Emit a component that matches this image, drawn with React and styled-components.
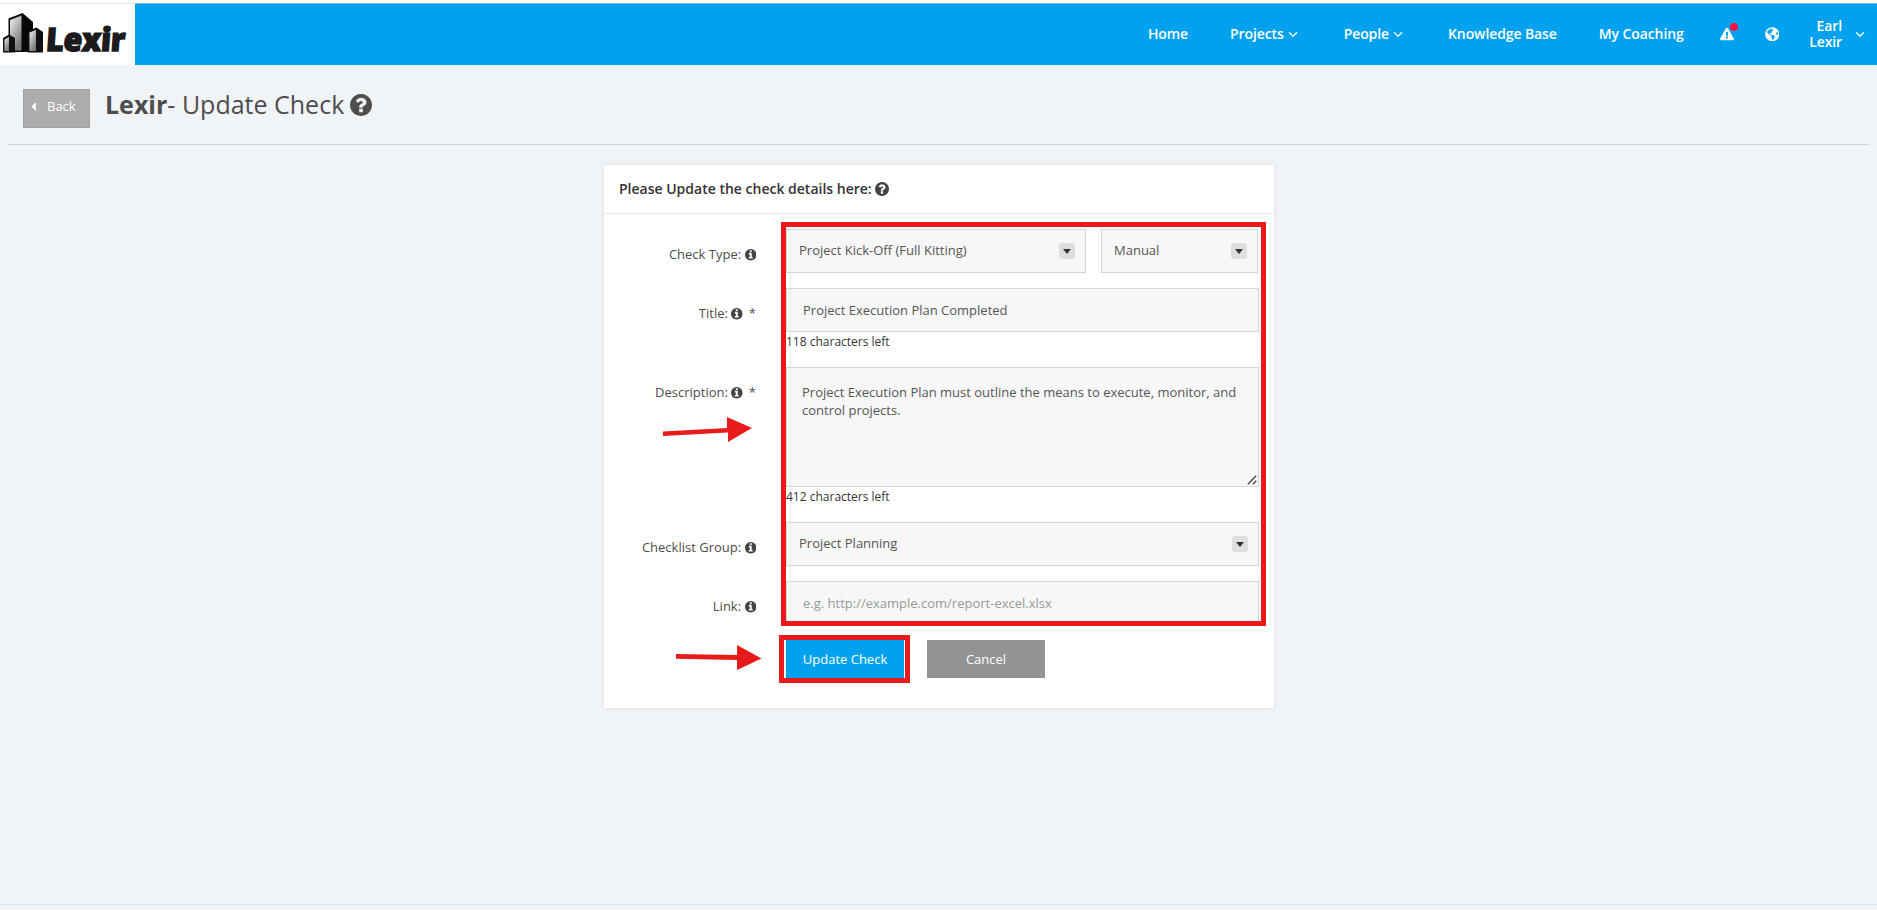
import React from "react";
import styled, { createGlobalStyle, css } from "styled-components";
import {
  FaExclamationTriangle,
  FaGlobeAmericas,
  FaCaretLeft,
} from "react-icons/fa";

const blue = "#00a2ef";
const red = "#e81b1b";
const dark = "#4d4d4d";
const fieldBorder = "#d5d5d5";

const navItems = [
  { label: "Home", gap: 42 },
  { label: "Projects", menu: true, gap: 46 },
  { label: "People", menu: true, gap: 45 },
  { label: "Knowledge Base", gap: 42 },
  { label: "My Coaching", gap: 36 },
];

const Chevron = () => (
  <svg width="10" height="7" viewBox="0 0 10 7" fill="none">
    <path d="M1 1.2 5 5.2 9 1.2" stroke="#fff" strokeWidth="1.3" />
  </svg>
);

const InfoIcon = () => (
  <svg width="1em" height="1em" viewBox="128 128 1536 1536" fill="currentColor">
    <path d="M1152 1376v-160q0-14-9-23t-23-9h-96v-512q0-14-9-23t-23-9h-320q-14 0-23 9t-9 23v160q0 14 9 23t23 9h96v320h-96q-14 0-23 9t-9 23v160q0 14 9 23t23 9h448q14 0 23-9t9-23zm-128-896v-160q0-14-9-23t-23-9h-192q-14 0-23 9t-9 23v160q0 14 9 23t23 9h192q14 0 23-9t9-23zm640 416q0 209-103 385.500t-279.500 279.500-385.500 103-385.500-103-279.500-279.500-103-385.500 103-385.500 279.500-279.500 385.500-103 385.500 103 279.500 279.500 103 385.500z" />
  </svg>
);

const HelpIcon = () => (
  <svg width="1em" height="1em" viewBox="128 128 1536 1536" fill="currentColor">
    <path d="M1024 1376v-192q0-14-9-23t-23-9h-192q-14 0-23 9t-9 23v192q0 14 9 23t23 9h192q14 0 23-9t9-23zm256-672q0-88-55.500-163t-138.500-116-170-41q-243 0-371 213-15 24 8 42l132 100q7 6 19 6 16 0 25-12 53-68 86-92 34-24 86-24 48 0 85.500 26t37.500 59q0 38-20 61t-68 45q-63 28-115.500 86.500t-52.500 125.500v36q0 14 9 23t23 9h192q14 0 23-9t9-23q0-19 21.500-49.500t54.500-49.500q32-18 49-28.500t46-35 44.500-48 28-60.500 12.500-81zm384 192q0 209-103 385.500t-279.500 279.500-385.500 103-385.500-103-279.500-279.500-103-385.500 103-385.500 279.500-279.500 385.500-103 385.500 103 279.500 279.500 103 385.500z" />
  </svg>
);

const Logo = () => (
  <LogoBox>
    <svg width="135" height="61" viewBox="0 4 135 61">
      <defs>
        <linearGradient id="wall" x1="0" y1="0" x2="0.6" y2="1">
          <stop offset="0" stopColor="#f4f4f4" />
          <stop offset="1" stopColor="#777" />
        </linearGradient>
      </defs>
      <path d="M8.5 18.5 22.5 13 33 22v30H8.5z" fill="#080808" />
      <path d="M10 20 21.5 15.5V50.5H10z" fill="url(#wall)" />
      <path d="M3 38 9 34.5 15 38v14.5H3z" fill="#111" />
      <path d="M4.5 39.5 9 37v14H4.5z" fill="url(#wall)" />
      <path d="M28 31 36.5 27.5 43 32v20.500H28z" fill="#111" />
      <path d="M29.500 32.500 36 30v21h-6.500z" fill="url(#wall)" />
      <text
        x="45.500"
        y="51.500"
        textLength="79"
        lengthAdjust="spacingAndGlyphs"
        transform="translate(3.600 0) skewX(-4)"
        fontFamily="Open Sans, sans-serif"
        fontSize="32"
        fontWeight="800"
        fill="#1b1b1d"
        stroke="#1b1b1d"
        strokeWidth="1.600"
      >
        Lexir
      </text>
    </svg>
  </LogoBox>
);

const Select = ({ value, width }) => (
  <SelectBox $width={width}>
    {value}
    <SelectArrow>
      <svg width="8" height="5" viewBox="0 0 8 5">
        <path d="M0 0h8L4 5z" fill="#333" />
      </svg>
    </SelectArrow>
  </SelectBox>
);

const Field = ({ label, required, children }) => (
  <Row>
    <Label>
      {label}: <InfoIcon />
      {required && <Star>*</Star>}
    </Label>
    <Control>{children}</Control>
  </Row>
);

const App = () => (
  <Page>
    <GlobalStyle />
    <TopBar>
      <Logo />
      <Nav>
        {navItems.map((item) => (
          <NavItem key={item.label} $gap={item.gap}>
            {item.label}
            {item.menu && <Chevron />}
          </NavItem>
        ))}
        <Alert>
          <FaExclamationTriangle />
          <Dot />
        </Alert>
        <Globe>
          <FaGlobeAmericas />
        </Globe>
        <User>
          Earl
          <br />
          Lexir
        </User>
        <Chevron />
      </Nav>
    </TopBar>

    <Heading>
      <BackButton>
        <FaCaretLeft />
        Back
      </BackButton>
      <Title>
        <strong>Lexir</strong>- Update Check
        <HelpIcon />
      </Title>
    </Heading>

    <Card>
      <CardHeader>
        Please Update the check details here:
        <HelpIcon />
      </CardHeader>
      <Form>
        <Field label="Check Type">
          <Select value="Project Kick-Off (Full Kitting)" width={300} />
          <Select value="Manual" width={157} />
        </Field>
        <Field label="Title" required>
          <Input defaultValue="Project Execution Plan Completed" />
          <Counter>118 characters left</Counter>
        </Field>
        <Field label="Description" required>
          <TextArea defaultValue="Project Execution Plan must outline the means to execute, monitor, and control projects." />
          <Grip width="10" height="10" viewBox="0 0 10 10">
            <path d="M.8 9.200 9.200.8M5.800 9.200 9.200 5.800" />
          </Grip>
          <Counter>412 characters left</Counter>
        </Field>
        <Field label="Checklist Group">
          <Select value="Project Planning" />
        </Field>
        <Field label="Link">
          <Input placeholder="e.g. http://example.com/report-excel.xlsx" />
        </Field>
        <Actions>
          <Button $color={blue}>Update Check</Button>
          <Button $color="#939393">Cancel</Button>
        </Actions>
      </Form>

      <Outline $left={177} $top={57} $width={485} $height={404} />
      <Outline $left={175} $top={470} $width={131} $height={48} />
      <Arrow $left={59} $top={252} width="90" height="26" viewBox="0 0 90 26">
        <path d="M0 14.500 64 11V0L89 11 65 25V15.500L0 19z" />
      </Arrow>
      <Arrow $left={72} $top={480} width="86" height="26" viewBox="0 0 86 26">
        <path d="M0 9 61 10V0L85.500 13.500 61 25V15L0 13.700z" />
      </Arrow>
    </Card>
    <Footer />
  </Page>
);

const GlobalStyle = createGlobalStyle`
  * {
    box-sizing: border-box;
  }
  body {
    margin: 0;
    background: #f0f4f7;
    color: ${dark};
    font: 13px/18px "Open Sans", sans-serif;
  }
`;

const Page = styled.div`
  display: flex;
  flex-direction: column;
  height: 910px;
  overflow: hidden;
`;

const TopBar = styled.header`
  display: flex;
  flex: none;
  height: 65px;
  border-top: 3px solid #fff;
  box-shadow: inset 0 1px #7fbfe0;
  background: ${blue};
`;

const LogoBox = styled.div`
  width: 135px;
  height: 62px;
  background: #fff;
  border-top: 1px solid #e3e3e3;
  svg {
    display: block;
  }
`;

const Nav = styled.nav`
  display: flex;
  align-items: center;
  margin-left: auto;
  padding-right: 12px;
  color: #fff;
  font-size: 14px;
  font-weight: 600;
  letter-spacing: -0.1px;
`;

const NavItem = styled.a`
  display: flex;
  align-items: center;
  gap: 4px;
  margin-right: ${(props) => props.$gap}px;
`;

const Alert = styled.span`
  position: relative;
  display: flex;
  margin-right: 31px;
  font-size: 14px;
`;

const Dot = styled.span`
  position: absolute;
  left: 10px;
  top: -4px;
  width: 8px;
  height: 8px;
  border-radius: 50%;
  background: #fb1440;
`;

const Globe = styled.span`
  display: flex;
  margin-right: 30px;
  font-size: 14.500px;
`;

const User = styled.span`
  margin-right: 13px;
  text-align: right;
  line-height: 16px;
  letter-spacing: -0.1px;
`;

const Heading = styled.div`
  display: flex;
  flex: none;
  height: 80px;
  margin: 0 8px;
  padding: 24px 15px 0;
  border-bottom: 1px solid #cbd7e1;
`;

const BackButton = styled.a`
  display: flex;
  align-items: center;
  gap: 7px;
  width: 67px;
  height: 39px;
  padding: 0 0 5px 3px;
  border: 1px solid #a0a0a0;
  background: #adadad;
  color: #fff;
  svg {
    font-size: 13px;
  }
`;

const Title = styled.h1`
  display: flex;
  align-items: center;
  height: 30px;
  margin: 0 0 0 15px;
  font-size: 25px;
  font-weight: 400;
  white-space: pre;
  svg {
    margin: 2px 0 0 6px;
    font-size: 22px;
  }
`;

const Card = styled.section`
  position: relative;
  flex: none;
  width: 670px;
  height: 543px;
  margin: 20px 0 0 604px;
  background: #fff;
  box-shadow: 0 0 4px rgba(0, 30, 60, 0.12);
`;

const CardHeader = styled.h2`
  display: flex;
  align-items: center;
  gap: 3px;
  height: 49px;
  margin: 0;
  padding: 0 15px 1px;
  border-bottom: 1px solid #e8e8e8;
  color: #333;
  font-size: 14px;
  font-weight: 600;
  svg {
    color: #444;
  }
`;

const Form = styled.form`
  padding: 15px 15px 0;
`;

const Row = styled.div`
  display: flex;
  margin-bottom: 15px;
`;

const Label = styled.label`
  width: 137px;
  padding-top: 16px;
  text-align: right;
  svg {
    font-size: 11.500px;
    vertical-align: -1.500px;
    color: #444;
  }
`;

const Star = styled.span`
  margin-left: 6px;
`;

const Control = styled.div`
  position: relative;
  display: flex;
  flex-wrap: wrap;
  gap: 0 15px;
  width: 473px;
  margin-left: 30px;
`;

const box = css`
  border: 1px solid ${fieldBorder};
  border-radius: 0;
  background: #f7f7f7;
  color: #555;
  font: inherit;
  outline: none;
`;

const SelectBox = styled.div`
  ${box}
  display: flex;
  align-items: center;
  justify-content: space-between;
  width: ${(props) => (props.$width ? `${props.$width}px` : "100%")};
  height: 44px;
  padding: 0 10px 2px 12px;
`;

const SelectArrow = styled.span`
  display: flex;
  align-items: center;
  justify-content: center;
  width: 16px;
  height: 16px;
  margin-top: 2px;
  border-radius: 3px;
  background: #dedede;
`;

const Input = styled.input`
  ${box}
  width: 100%;
  height: 44px;
  padding: 0 16px;
  &::placeholder {
    color: #999;
  }
`;

const TextArea = styled.textarea`
  ${box}
  width: 100%;
  height: 120px;
  padding: 15px;
  resize: none;
`;

// resize handle in the textarea's corner
const Grip = styled.svg`
  position: absolute;
  top: 108px;
  right: 2px;
  stroke: #444;
  stroke-width: 1.4;
`;

const Counter = styled.small`
  height: 20px;
  color: #333;
  font-size: 12px;
  line-height: 20px;
`;

const Actions = styled.div`
  display: flex;
  gap: 23px;
  padding-left: 167px;
`;

const Button = styled.button`
  width: 118px;
  height: 38px;
  padding: 0;
  border: 0;
  background: ${(props) => props.$color};
  color: #fff;
  font: inherit;
`;

// red call-outs laid over the form
const Outline = styled.div`
  position: absolute;
  left: ${(props) => props.$left}px;
  top: ${(props) => props.$top}px;
  width: ${(props) => props.$width}px;
  height: ${(props) => props.$height}px;
  border: 5px solid ${red};
  pointer-events: none;
`;

const Arrow = styled.svg`
  position: absolute;
  left: ${(props) => props.$left}px;
  top: ${(props) => props.$top}px;
  fill: ${red};
`;

const Footer = styled.footer`
  flex: none;
  height: 6px;
  margin-top: auto;
  border-top: 1px solid #d5e2ec;
`;

export default App;
